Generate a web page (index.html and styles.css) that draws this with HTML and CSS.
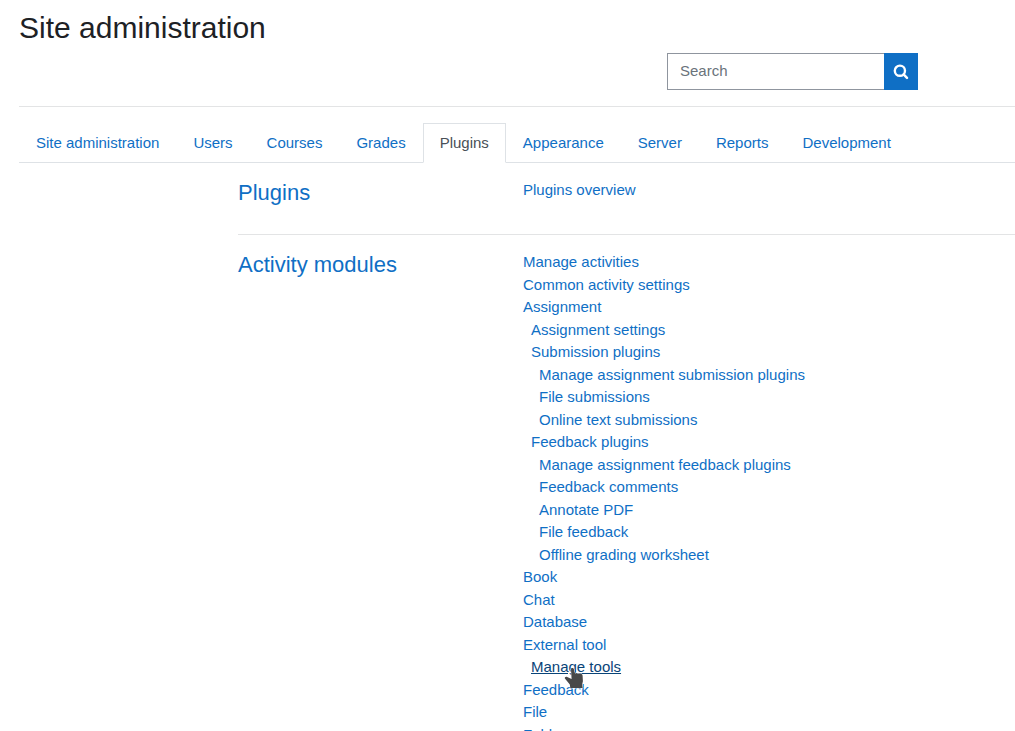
FILE: index.html
```html
<!DOCTYPE html>
<html lang="en">
<head>
<meta charset="utf-8">
<meta name="viewport" content="width=device-width, initial-scale=1">
<title>Site administration</title>
<link rel="stylesheet" href="styles.css">
</head>
<body>
<main class="page">
  <header class="page-header">
    <h1 class="page-title">Site administration</h1>
    <form class="search" role="search">
      <input class="search-input" type="text" placeholder="Search" aria-label="Search">
      <button class="search-button" type="submit" aria-label="Search">
        <svg class="search-icon" viewBox="0 0 16 16" aria-hidden="true"><circle cx="6.9" cy="6.7" r="5.1" fill="none" stroke="currentColor" stroke-width="2.4"/><path d="M10.6 10.4 14 13.8" stroke="currentColor" stroke-width="2.5" stroke-linecap="round"/></svg>
      </button>
    </form>
  </header>

  <nav class="tabs" aria-label="Administration sections">
    <a class="tab" href="#root">Site administration</a>
    <a class="tab" href="#users">Users</a>
    <a class="tab" href="#courses">Courses</a>
    <a class="tab" href="#grades">Grades</a>
    <a class="tab tab-active" href="#plugins" aria-current="page">Plugins</a>
    <a class="tab" href="#appearance">Appearance</a>
    <a class="tab" href="#server">Server</a>
    <a class="tab" href="#reports">Reports</a>
    <a class="tab" href="#development">Development</a>
  </nav>

  <div class="sections">
    <section class="section">
      <h2 class="section-title"><a href="#plugins">Plugins</a></h2>
      <ul class="links">
        <li><a href="#overview">Plugins overview</a></li>
      </ul>
    </section>
    <section class="section">
      <h2 class="section-title"><a href="#modules">Activity modules</a></h2>
      <ul class="links">
        <li><a href="#activities">Manage activities</a></li>
        <li><a href="#common">Common activity settings</a></li>
        <li><a href="#assignment">Assignment</a>
          <ul class="links links-nested">
            <li><a href="#assign-settings">Assignment settings</a></li>
            <li><a href="#submission">Submission plugins</a>
              <ul class="links links-nested">
                <li><a href="#manage-submission">Manage assignment submission plugins</a></li>
                <li><a href="#file-submissions">File submissions</a></li>
                <li><a href="#online-text">Online text submissions</a></li>
              </ul>
            </li>
            <li><a href="#feedback-plugins">Feedback plugins</a>
              <ul class="links links-nested">
                <li><a href="#manage-feedback">Manage assignment feedback plugins</a></li>
                <li><a href="#comments">Feedback comments</a></li>
                <li><a href="#pdf">Annotate PDF</a></li>
                <li><a href="#file-feedback">File feedback</a></li>
                <li><a href="#offline">Offline grading worksheet</a></li>
              </ul>
            </li>
          </ul>
        </li>
        <li><a href="#book">Book</a></li>
        <li><a href="#chat">Chat</a></li>
        <li><a href="#database">Database</a></li>
        <li><a href="#external">External tool</a>
          <ul class="links links-nested">
            <li class="pointed"><a class="link-hover" href="#tools">Manage tools</a>
              <svg class="pointer" viewBox="0 0 20 22" aria-hidden="true"><path d="M7 2C7 .9 9.4.7 9.8 2L11 6.6l1.7-.5 1 .6 1.5-.5 1.1.8 1.2-.1c.8.3 1 1 1.1 1.9l.3 5.5-.7 3 .5 3.6H6.3L5.8 17.4.9 11.6C.3 10.2 1.8 9.3 3.2 9.9l4.4 2Z" fill="#484848" stroke="#fff" stroke-width="1" paint-order="stroke" stroke-linejoin="round"/></svg>
            </li>
          </ul>
        </li>
        <li><a href="#feedback">Feedback</a></li>
        <li><a href="#file">File</a></li>
        <li><a href="#folder">Folder</a></li>
      </ul>
    </section>
  </div>
</main>
</body>
</html>
```

FILE: styles.css
```css
* {
  box-sizing: border-box;
}

body {
  margin: 0;
  background: #fff;
  color: #1d2125;
  font: 15px/1.5 "Liberation Sans", Arial, sans-serif;
}

a {
  color: #0f6fc5;
  text-decoration: none;
}

a:hover,
.link-hover {
  color: #094478;
  text-decoration: underline;
}

.page {
  height: 100vh;
  padding: 10px 0 0 19px;
  overflow: hidden;
}

.page-header {
  padding-bottom: 16px;
  border-bottom: 1px solid #e3e4e5;
}

.page-title {
  margin: 0 0 7px;
  font-size: 30px;
  font-weight: 400;
  line-height: 36px;
}

.search {
  display: flex;
  width: 251px;
  margin: 0 97px 0 auto;
}

.search-input {
  flex: 1;
  min-width: 0;
  height: 37px;
  padding: 5px 12px 7px;
  border: 1px solid #8f959e;
  border-right: 0;
  border-radius: 0;
  background: #fff;
  color: #495057;
  font: inherit;
}

.search-input::placeholder {
  color: #6a737b;
  opacity: 1;
}

.search-button {
  display: flex;
  align-items: center;
  justify-content: center;
  width: 34px;
  padding: 0;
  border: 0;
  background: #0f6fc5;
  color: #fff;
}

.search-icon {
  width: 16px;
  height: 16px;
}

.tabs {
  display: flex;
  margin-top: 16px;
  border-bottom: 1px solid #dee2e6;
}

.tab {
  margin-bottom: -1px;
  padding: 8px 16px;
  border: 1px solid transparent;
  line-height: 22px;
}

.tab-active {
  border-color: #dee2e6 #dee2e6 #fff;
  background: #fff;
  color: #495057;
}

.sections {
  margin-left: 219px;
}

.section {
  display: grid;
  grid-template-columns: 285px 1fr;
  padding: 16px 0;
}

.section + .section {
  border-top: 1px solid #e3e4e5;
}

.section-title {
  margin: 0 0 12px;
  font-size: 22px;
  font-weight: 400;
  line-height: 27px;
}

.links {
  margin: 0;
  padding: 0;
  list-style: none;
}

.links-nested {
  padding-left: 8px;
}

.pointed {
  position: relative;
}

.pointer {
  position: absolute;
  top: 11px;
  left: 33px;
  z-index: 1;
  width: 20px;
  height: 22px;
}
```
